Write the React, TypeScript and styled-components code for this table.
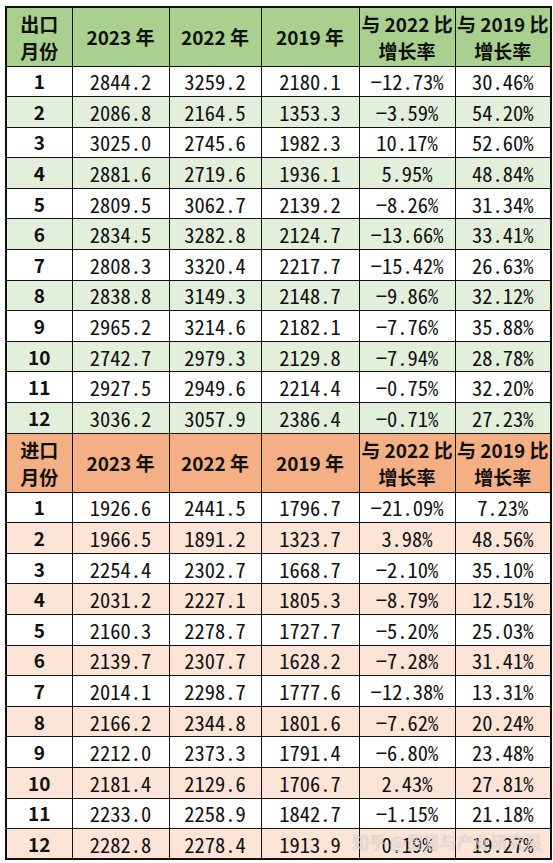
import { FC } from 'react'
import styled, { createGlobalStyle } from 'styled-components'

const GlobalStyle = createGlobalStyle`
  body {
    margin: 0;
    background: #ffffff;
  }
`

type Theme = 'green' | 'orange'

const palette = {
  green: { head: '#a9d08e', band: '#e2efda' },
  orange: { head: '#f4b084', band: '#fce4d6' },
}

const exportRows = [
  ['1', '2844.2', '3259.2', '2180.1', '−12.73%', '30.46%'],
  ['2', '2086.8', '2164.5', '1353.3', '−3.59%', '54.20%'],
  ['3', '3025.0', '2745.6', '1982.3', '10.17%', '52.60%'],
  ['4', '2881.6', '2719.6', '1936.1', '5.95%', '48.84%'],
  ['5', '2809.5', '3062.7', '2139.2', '−8.26%', '31.34%'],
  ['6', '2834.5', '3282.8', '2124.7', '−13.66%', '33.41%'],
  ['7', '2808.3', '3320.4', '2217.7', '−15.42%', '26.63%'],
  ['8', '2838.8', '3149.3', '2148.7', '−9.86%', '32.12%'],
  ['9', '2965.2', '3214.6', '2182.1', '−7.76%', '35.88%'],
  ['10', '2742.7', '2979.3', '2129.8', '−7.94%', '28.78%'],
  ['11', '2927.5', '2949.6', '2214.4', '−0.75%', '32.20%'],
  ['12', '3036.2', '3057.9', '2386.4', '−0.71%', '27.23%'],
]

const importRows = [
  ['1', '1926.6', '2441.5', '1796.7', '−21.09%', '7.23%'],
  ['2', '1966.5', '1891.2', '1323.7', '3.98%', '48.56%'],
  ['3', '2254.4', '2302.7', '1668.7', '−2.10%', '35.10%'],
  ['4', '2031.2', '2227.1', '1805.3', '−8.79%', '12.51%'],
  ['5', '2160.3', '2278.7', '1727.7', '−5.20%', '25.03%'],
  ['6', '2139.7', '2307.7', '1628.2', '−7.28%', '31.41%'],
  ['7', '2014.1', '2298.7', '1777.6', '−12.38%', '13.31%'],
  ['8', '2166.2', '2344.8', '1801.6', '−7.62%', '20.24%'],
  ['9', '2212.0', '2373.3', '1791.4', '−6.80%', '23.48%'],
  ['10', '2181.4', '2129.6', '1706.7', '2.43%', '27.81%'],
  ['11', '2233.0', '2258.9', '1842.7', '−1.15%', '21.18%'],
  ['12', '2282.8', '2278.4', '1913.9', '0.19%', '19.27%'],
]

const Page = styled.div`
  position: relative;
  padding: 6px 0 0 5px;
`

const Table = styled.table`
  border-collapse: collapse;
  table-layout: fixed;
  width: 545px;
  border: 2px solid #111;
  color: #111;
`

const HeadRow = styled.tr<{ $theme: Theme }>`
  height: 59px;
  background: ${(p) => palette[p.$theme].head};
`

const DataRow = styled.tr<{ $theme: Theme; $band: boolean }>`
  height: 30.6px;
  background: ${(p) => (p.$band ? palette[p.$theme].band : '#ffffff')};
`

const HeadCell = styled.td`
  border: 1px solid #111;
  padding: 0;
  text-align: center;
  vertical-align: middle;
  font-family: 'Noto Sans CJK SC', 'Noto Sans', sans-serif;
  font-weight: 700;
  font-size: 19px;
  line-height: 27px;
  white-space: nowrap;
`

const MonthCell = styled.td`
  border: 1px solid #111;
  padding: 0;
  text-align: center;
  font-family: 'Noto Sans CJK SC', 'Noto Sans', sans-serif;
  font-weight: 700;
  font-size: 19px;
  line-height: 28px;
`

const ValueCell = styled.td`
  border: 1px solid #111;
  padding: 0;
  text-align: center;
  font-family: 'Noto Sans Mono CJK SC', 'DejaVu Sans Mono', monospace;
  font-size: 20.5px;
  line-height: 28px;
  white-space: nowrap;
`

// faint site watermark laid over the last rows
const Watermark = styled.div`
  position: absolute;
  left: 352px;
  top: 829px;
  font-family: 'Noto Sans CJK SC', sans-serif;
  font-size: 17px;
  color: rgba(255, 255, 255, 0.6);
  text-shadow: 0 0 1px rgba(120, 120, 120, 0.6);
  white-space: nowrap;
`

const cols = [66, 97, 92, 98, 96, 96]

const Section: FC<{ theme: Theme; label: string; rows: string[][] }> = ({ theme, label, rows }) => (
  <>
    <HeadRow $theme={theme}>
      <HeadCell>
        {label}
        <br />
        月份
      </HeadCell>
      <HeadCell>2023 年</HeadCell>
      <HeadCell>2022 年</HeadCell>
      <HeadCell>2019 年</HeadCell>
      <HeadCell>
        与 2022 比
        <br />
        增长率
      </HeadCell>
      <HeadCell>
        与 2019 比
        <br />
        增长率
      </HeadCell>
    </HeadRow>
    {rows.map((r, i) => (
      <DataRow key={r[0]} $theme={theme} $band={i % 2 === 1}>
        <MonthCell>{r[0]}</MonthCell>
        {r.slice(1).map((v, j) => (
          <ValueCell key={j}>{v}</ValueCell>
        ))}
      </DataRow>
    ))}
  </>
)

export default function App() {
  return (
    <Page>
      <GlobalStyle />
      <Table>
        <colgroup>
          {cols.map((w, i) => (
            <col key={i} style={{ width: w }} />
          ))}
        </colgroup>
        <tbody>
          <Section theme="green" label="出口" rows={exportRows} />
          <Section theme="orange" label="进口" rows={importRows} />
        </tbody>
      </Table>
      <Watermark>知乎 @贸易与产业研究员</Watermark>
    </Page>
  )
}
